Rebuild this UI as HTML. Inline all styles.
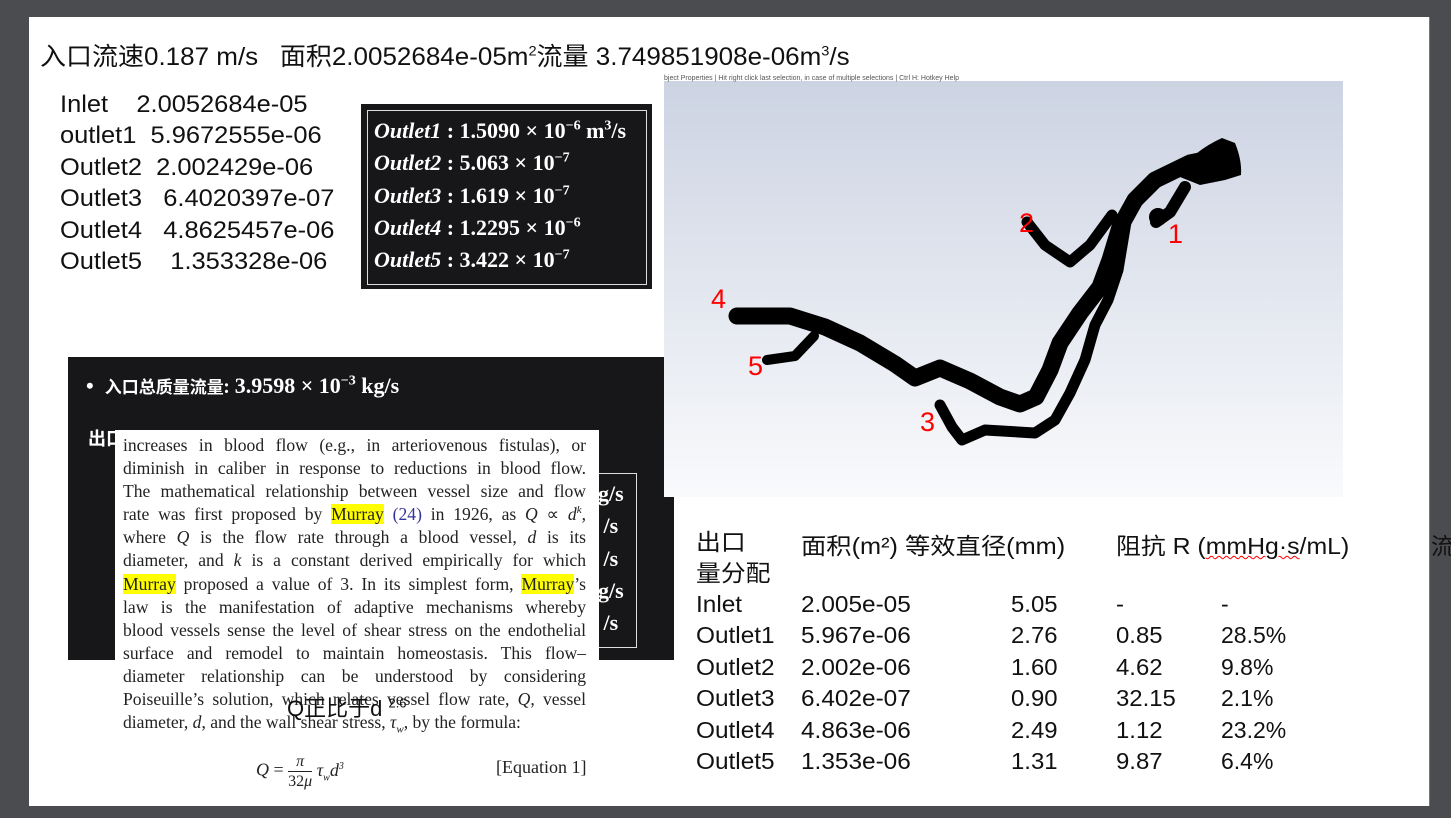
<!DOCTYPE html>
<html><head><meta charset="utf-8"><style>
body{margin:0;width:1451px;height:818px;background:#4b4c4f;position:relative;overflow:hidden;font-family:"Liberation Sans","Noto Sans CJK SC",sans-serif}
.a{position:absolute;white-space:nowrap}
.c{display:inline-block;transform-origin:left center}
.slide{position:absolute;left:29px;top:17px;width:1400px;height:789px;background:#fff;border-right:1px solid #777}
.sf{font-family:"Liberation Serif","Noto Serif CJK SC",serif}
.hl{background:#ffff00}
.mb{font-family:"Liberation Serif",serif;font-weight:bold;color:#fff}
.mb i{font-style:italic}
sup{line-height:0}
.para{position:absolute;left:123px;top:434px;width:463px;font-family:"Liberation Serif",serif;font-size:17.6px;line-height:23.1px;color:#222}
.para div{text-align:justify;text-align-last:justify;height:23.1px;white-space:nowrap}
.t{font-size:23px;color:#111}
.red{color:#f00;font-size:27px;position:absolute}
.mr div{height:32.3px;line-height:32.3px}
</style></head><body>
<div class="slide"></div>
<div class="a" style="left:40px;top:37px;font-size:25px;color:#111"><span class="c" style="transform:scaleX(1.04)">入口流速0.187 m/s &nbsp; 面积2.0052684e-05m<sup style="font-size:14px">2</sup>流量 3.749851908e-06m<sup style="font-size:14px">3</sup>/s</span></div>

<div class="a" style="left:60px;top:89px;line-height:31.4px;font-size:24px;color:#111"><span class="c" style="transform:scaleX(1.06)">
Inlet &nbsp;&nbsp;&nbsp;2.0052684e-05<br>outlet1 &nbsp;5.9672555e-06<br>Outlet2 &nbsp;2.002429e-06<br>Outlet3 &nbsp;&nbsp;6.4020397e-07<br>Outlet4 &nbsp;&nbsp;4.8625457e-06<br>Outlet5 &nbsp;&nbsp;&nbsp;1.353328e-06</span></div>

<div class="a" style="left:361px;top:104px;width:291px;height:185px;background:#17171a"></div>
<div class="a" style="left:367px;top:110px;width:278px;height:173px;border:1px solid #ddd"></div>
<div class="a mb mr" style="left:374px;top:115px;font-size:22px">
<div><i>Outlet1</i> : 1.5090 × 10<sup style="font-size:14px">−6</sup> m<sup style="font-size:14px">3</sup>/s</div>
<div><i>Outlet2</i> : 5.063 × 10<sup style="font-size:14px">−7</sup></div>
<div><i>Outlet3</i> : 1.619 × 10<sup style="font-size:14px">−7</sup></div>
<div><i>Outlet4</i> : 1.2295 × 10<sup style="font-size:14px">−6</sup></div>
<div><i>Outlet5</i> : 3.422 × 10<sup style="font-size:14px">−7</sup></div></div>

<div class="a" style="left:68px;top:357px;width:606px;height:303px;background:#17171a"></div>
<div class="a mb" style="left:86px;top:373px;font-size:22px">•&nbsp; <span style="font-family:'Noto Sans CJK SC',sans-serif;font-size:17px">入口总质量流量:</span> 3.9598 × 10<sup style="font-size:14px">−3</sup> kg/s</div>
<div class="a mb" style="left:88px;top:425px;font-size:18px;font-family:'Noto Sans CJK SC',sans-serif">出口</div>
<div class="a" style="left:560px;top:473px;width:75px;height:173px;border:1px solid #ddd"></div>
<div class="a mb mr" style="left:598px;top:478px;font-size:22px"><div>g/s</div><div>&nbsp;/s</div><div>&nbsp;/s</div><div>g/s</div><div>&nbsp;/s</div></div>

<div class="a" style="left:115px;top:430px;width:484px;height:376px;background:#fff"></div>
<div class="para">
<div>increases in blood flow (e.g., in arteriovenous fistulas), or</div>
<div>diminish in caliber in response to reductions in blood flow.</div>
<div>The mathematical relationship between vessel size and flow</div>
<div>rate was first proposed by <span class="hl">Murray</span> <span style="color:#33339a">(24)</span> in 1926, as <i>Q</i> ∝ <i>d<sup style="font-size:11px">k</sup></i>,</div>
<div>where <i>Q</i> is the flow rate through a blood vessel, <i>d</i> is its</div>
<div>diameter, and <i>k</i> is a constant derived empirically for which</div>
<div><span class="hl">Murray</span> proposed a value of 3. In its simplest form, <span class="hl">Murray</span>’s</div>
<div>law is the manifestation of adaptive mechanisms whereby</div>
<div>blood vessels sense the level of shear stress on the endothelial</div>
<div>surface and remodel to maintain homeostasis. This flow–</div>
<div>diameter relationship can be understood by considering</div>
<div>Poiseuille’s solution, which relates vessel flow rate, <i>Q</i>, vessel</div>
<div style="text-align-last:left">diameter, <i>d</i>, and the wall shear stress, <i>τ<sub style="font-size:11px;line-height:0">w</sub></i>, by the formula:</div>
</div>
<div class="a sf" style="left:256px;top:752px;font-size:18px;color:#222"><i>Q</i> = <span style="display:inline-block;text-align:center;vertical-align:middle;font-size:16px;line-height:19px"><i>π</i><br><span style="border-top:1px solid #222;display:block">32<i>μ</i></span></span> <i>τ<sub style="font-size:10px;line-height:0">w</sub>d<sup style="font-size:10px">3</sup></i></div>
<div class="a sf" style="left:496px;top:757px;font-size:18px;color:#222">[Equation 1]</div>
<div class="a" style="left:287px;top:691px;font-size:22px;color:#111">Q正比于d <sup style="font-size:13px">2.6</sup></div>

<div class="a" style="left:664px;top:81px;width:679px;height:416px;background:linear-gradient(#ccd3e2,#f9fafc)"></div>
<div class="a" style="left:664px;top:75px;font-size:7px;color:#555">bject Properties | Hit right click last selection, in case of multiple selections | Ctrl H: Hotkey Help</div>
<svg class="a" style="left:0;top:0" width="1451" height="818">
<g fill="none" stroke="#000" stroke-linecap="round" stroke-linejoin="round">
<path stroke-width="17" d="M737 316 L790 316 L825 327 L860 343 L895 364 L915 378 L940 368 L970 381 L1000 397 L1020 404 L1036 397 L1050 370 L1060 343 L1080 313 L1100 287 L1110 260 L1120 227 L1135 200 L1155 180 L1190 163 L1220 157"/>
<path stroke-width="11" d="M1128 210 L1118 270 L1108 300 L1095 325 L1085 360 L1070 393 L1055 420 L1035 433 L985 430 L962 440 L952 427 L940 405"/>
<path stroke-width="11" d="M1027 222 L1045 245 L1070 262 L1090 245 L1112 215"/>
<path stroke-width="10" d="M767 360 L795 356 L814 336"/>
<path stroke-width="12" d="M1185 187 L1170 212 L1156 222"/>
</g>
<path fill="#000" d="M1175 175 Q1195 150 1222 138 L1235 143 Q1242 160 1241 175 L1225 180 L1200 185 Z"/>
<circle cx="1158" cy="217" r="9"/>
</svg>
<div class="red" style="left:1168px;top:219px">1</div>
<div class="red" style="left:1019px;top:208px">2</div>
<div class="red" style="left:920px;top:407px">3</div>
<div class="red" style="left:711px;top:284px">4</div>
<div class="red" style="left:748px;top:351px">5</div>

<div class="a t" style="left:696px;top:527px;line-height:31.4px"><span class="c" style="transform:scaleX(1.08)">出口</span><br><span class="c" style="transform:scaleX(1.08)">量分配</span></div>
<div class="a t" style="left:801px;top:527px"><span class="c" style="transform:scaleX(1.1)">面积(m²) 等效直径(mm)</span></div>
<div class="a t" style="left:1116px;top:527px"><span class="c" style="transform:scaleX(1.08)">阻抗 R (<span style="text-decoration:underline wavy red;text-decoration-thickness:1px">mmHg·s</span>/mL)</span></div>
<div class="a t" style="left:1431px;top:527px;color:#111">流</div>
<div class="a t" style="left:696px;top:589px;line-height:31.4px"><span class="c" style="transform:scaleX(1.06)">Inlet<br>Outlet1<br>Outlet2<br>Outlet3<br>Outlet4<br>Outlet5</span></div>
<div class="a t" style="left:801px;top:589px;line-height:31.4px"><span class="c" style="transform:scaleX(1.06)">2.005e-05<br>5.967e-06<br>2.002e-06<br>6.402e-07<br>4.863e-06<br>1.353e-06</span></div>
<div class="a t" style="left:1011px;top:589px;line-height:31.4px"><span class="c" style="transform:scaleX(1.04)">5.05<br>2.76<br>1.60<br>0.90<br>2.49<br>1.31</span></div>
<div class="a t" style="left:1116px;top:589px;line-height:31.4px"><span class="c" style="transform:scaleX(1.04)">-<br>0.85<br>4.62<br>32.15<br>1.12<br>9.87</span></div>
<div class="a t" style="left:1221px;top:589px;line-height:31.4px"><span class="c" style="transform:scaleX(1.0)">-<br>28.5%<br>9.8%<br>2.1%<br>23.2%<br>6.4%</span></div>
</body></html>
